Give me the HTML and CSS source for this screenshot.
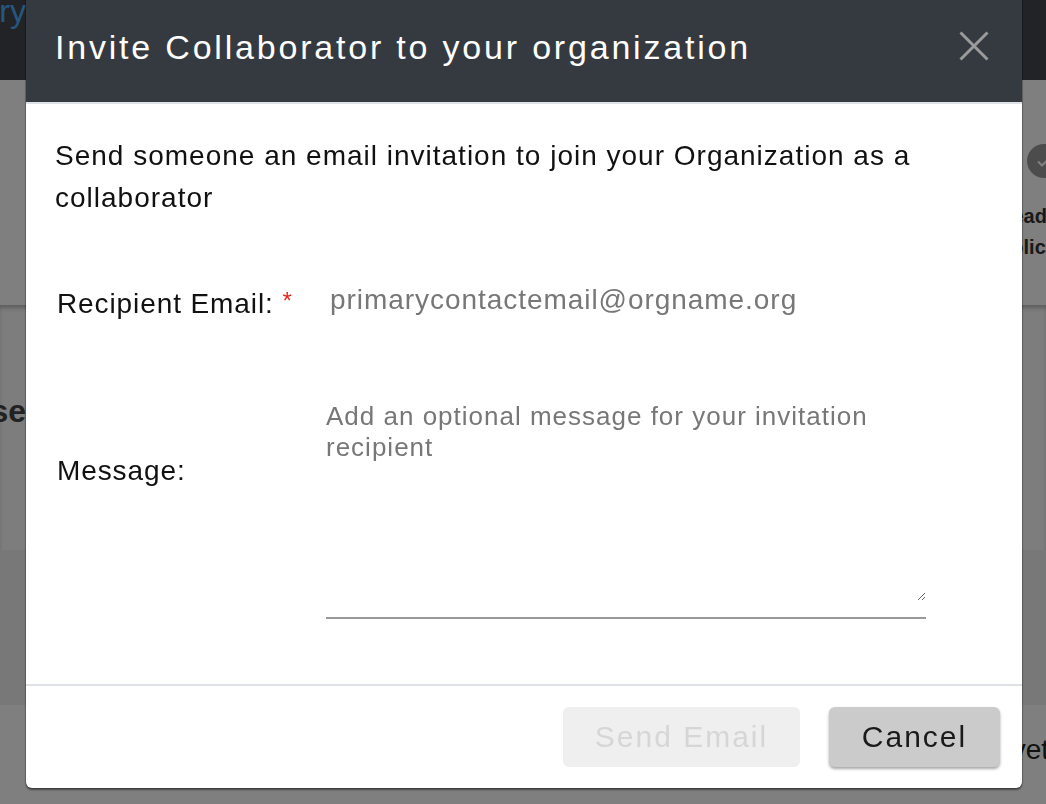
FILE: index.html
```html
<!DOCTYPE html>
<html lang="en">
  <head>
    <meta charset="UTF-8" />
    <meta name="viewport" content="width=device-width, initial-scale=1.0" />
    <title>Invite Collaborator</title>
    <link rel="stylesheet" href="styles.css">
  </head>
  <body>
    <div class="page">
      <header class="navbar">
        <div class="edge-left"><span class="brand">Directory</span></div>
      </header>

      <section class="steps">
        <div class="step">
          <span class="step-icon">
            <svg width="18" height="18" viewBox="0 0 18 18">
              <path d="M3 9.5l4 4 8-8" fill="none" stroke="#fff" stroke-width="2" />
            </svg>
          </span>
          <span class="step-label">Read<br />Policies</span>
        </div>
      </section>

      <section class="panel">
        <div class="edge-left"><h2 class="panel-title">License</h2></div>
      </section>

      <section class="band"></section>

      <section class="bottom-row">
        <span class="bottom-text">Not yet</span>
      </section>
    </div>

    <div class="overlay">
      <div class="modal" role="dialog" aria-labelledby="inviteTitle">
        <div class="modal-header">
          <h1 id="inviteTitle" class="modal-title">Invite Collaborator to your organization</h1>
          <button type="button" class="close" aria-label="Close">
            <svg width="30" height="30" viewBox="0 0 30 30">
              <path d="M1.5 1.5l27 27M28.5 1.5l-27 27" stroke="#9b9b9b" stroke-width="3" />
            </svg>
          </button>
        </div>

        <div class="modal-body">
          <p class="intro">
            Send someone an email invitation to join your Organization as a collaborator
          </p>

          <form id="inviteForm" class="invite-form">
            <label for="email" class="field-label email-label">
              Recipient Email: <span class="required">*</span>
            </label>
            <input type="email" id="email" name="email" class="email-input"
              placeholder="primarycontactemail@orgname.org" required />

            <label for="message" class="field-label message-label">Message:</label>
            <div class="message-field">
              <textarea id="message" name="message" class="message-input"
                placeholder="Add an optional message for your invitation recipient"></textarea>
            </div>
          </form>
        </div>

        <div class="modal-footer">
          <button type="submit" form="inviteForm" class="btn btn-send" disabled>Send Email</button>
          <button type="button" class="btn btn-cancel">Cancel</button>
        </div>
      </div>
    </div>
  </body>
</html>
```

FILE: styles.css
```css
body {
  font-family: "Liberation Sans", Arial, sans-serif;
  margin: 0;
  padding: 0;
  color: #222;
  background-color: #fff;
  overflow: hidden;
}
.page {
  width: 1046px;
  height: 804px;
  overflow: hidden;
}
.edge-left {
  width: 26px;
  display: flex;
  justify-content: flex-end;
  white-space: nowrap;
}
.navbar {
  height: 80px;
  background: #42474e;
  overflow: hidden;
}
.brand {
  font-size: 32px;
  line-height: 1;
  color: #4caef8;
  margin-top: -5px;
}
.steps {
  height: 225px;
  padding-top: 64px;
  box-sizing: border-box;
  display: flex;
  justify-content: flex-end;
  margin-right: -49px;
}
.step {
  width: 100px;
  display: flex;
  flex-direction: column;
  align-items: flex-start;
}
.step-icon {
  width: 34px;
  height: 34px;
  margin-left: 32px;
  border-radius: 50%;
  background: #999;
  display: flex;
  align-items: center;
  justify-content: center;
}
.step-label {
  margin-top: 23px;
  margin-left: 3px;
  font-size: 20px;
  font-weight: bold;
  line-height: 31px;
  color: #333;
}
.panel {
  height: 245px;
  background: #fafafa;
  box-shadow: inset 0 4px 4px -1px rgba(0, 0, 0, 0.25);
  padding-top: 86px;
  box-sizing: border-box;
}
.panel-title {
  margin: 0;
  font-size: 32px;
  line-height: 40px;
  color: #444;
}
.band {
  height: 155px;
  background: #f0f0f0;
}
.bottom-row {
  height: 99px;
  display: flex;
  justify-content: flex-end;
  padding-top: 28px;
  box-sizing: border-box;
  margin-right: -3px;
}
.bottom-text {
  font-size: 28px;
  line-height: 34px;
  color: #222;
  white-space: nowrap;
}

/* modal */
.overlay {
  position: fixed;
  top: 0;
  left: 0;
  right: 0;
  bottom: 0;
  background: rgba(0, 0, 0, 0.5);
}
.modal {
  position: absolute;
  left: 26px;
  top: -8px;
  width: 996px;
  background: #fff;
  border-radius: 6px;
  box-shadow: 0 2px 2px rgba(0, 0, 0, 0.45), 0 0 0 1px rgba(0, 0, 0, 0.15);
  overflow: hidden;
}
.modal-header {
  height: 112px;
  box-sizing: border-box;
  padding: 0 33px 0 29px;
  background: #343a40;
  border-bottom: 2px solid #dee2e6;
  display: flex;
  align-items: center;
  justify-content: space-between;
}
.modal-title {
  margin: 0;
  font-size: 34px;
  font-weight: normal;
  letter-spacing: 2.8px;
  color: #fff;
}
.close {
  width: 30px;
  height: 30px;
  padding: 0;
  margin-top: -3px;
  border: none;
  background: none;
  cursor: pointer;
}
.close svg {
  display: block;
}
.modal-body {
  padding: 31px 29px 65px 29px;
}
.intro {
  margin: 0;
  font-size: 28px;
  line-height: 42px;
  letter-spacing: 1px;
  color: #111;
}
.invite-form {
  margin-top: 57px;
  display: grid;
  grid-template-columns: 271px 600px;
  row-gap: 77px;
}
.field-label {
  padding-left: 2px;
  font-size: 28px;
  line-height: 34px;
  letter-spacing: 0.9px;
  color: #111;
}
.email-label {
  padding-top: 8px;
}
.message-label {
  padding-top: 53px;
}
.required {
  color: #e5261f;
  font-size: 24px;
  vertical-align: 4px;
}
.email-input {
  height: 48px;
  padding: 0 4px;
  border: none;
  outline: none;
  font-family: inherit;
  font-size: 28px;
  letter-spacing: 0.95px;
  color: #777;
}
.email-input::placeholder,
.message-input::placeholder {
  color: #777;
  opacity: 1;
}
.message-field {
  padding-bottom: 16px;
  border-bottom: 2px solid #999;
}
.message-input {
  display: block;
  width: 100%;
  height: 200px;
  box-sizing: border-box;
  padding: 0;
  border: none;
  outline: none;
  font-family: inherit;
  font-size: 26px;
  line-height: 31px;
  letter-spacing: 1px;
  color: #777;
}
.modal-footer {
  border-top: 2px solid #dee2e6;
  padding: 21px 22px 21px;
  display: flex;
  justify-content: flex-end;
  gap: 29px;
}
.btn {
  height: 60px;
  border: none;
  border-radius: 6px;
  font-family: inherit;
  font-size: 30px;
  letter-spacing: 2px;
  cursor: pointer;
}
.btn-send {
  width: 237px;
  background: #efefef;
  color: #d6d6d6;
  cursor: default;
}
.btn-cancel {
  width: 171px;
  background: #cbcbcb;
  color: #1a1a1a;
  box-shadow: 0 2px 3px rgba(0, 0, 0, 0.35);
}
```
